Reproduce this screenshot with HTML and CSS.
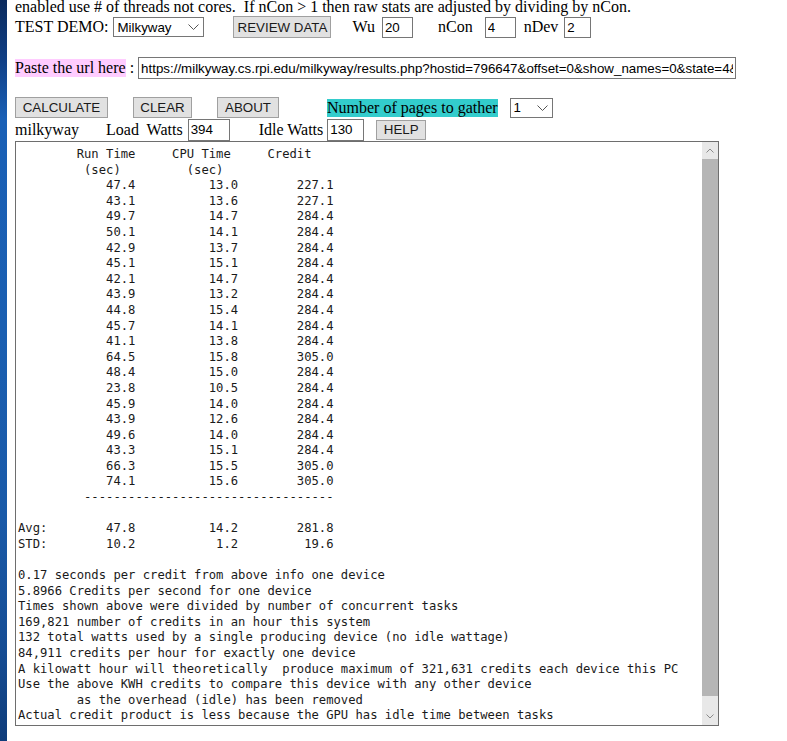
FILE: index.html
```html
<!DOCTYPE html>
<html>
<head>
<meta charset="utf-8">
<title>Credit calculator</title>
<link rel="stylesheet" href="styles.css">
</head>
<body>
<div class="page">
  <div class="intro">enabled use # of threads not cores.&nbsp; If nCon &gt; 1 then raw stats are adjusted by dividing by nCon.</div>

  <div class="row row-demo">
    <span class="label">TEST DEMO:</span>
    <span class="select sel-demo"><span class="sel-text">Milkyway</span><svg class="chev" width="11" height="6" viewBox="0 0 11 6"><path d="M0.5 0.5 L5.5 5.5 L10.5 0.5" fill="none" stroke="#555" stroke-width="1"/></svg></span>
    <button class="btn btn-review">REVIEW DATA</button>
    <span class="label l-wu">Wu</span>
    <input class="field f-wu" type="text" value="20">
    <span class="label l-ncon">nCon</span>
    <input class="field f-ncon" type="text" value="4">
    <span class="label l-ndev">nDev</span>
    <input class="field f-ndev" type="text" value="2">
  </div>

  <div class="row row-url">
    <span class="label pink">Paste the url here</span>
    <span class="label colon">:</span>
    <input class="field f-url" type="text" value="https://milkyway.cs.rpi.edu/milkyway/results.php?hostid=796647&amp;offset=0&amp;show_names=0&amp;state=4&amp;appid=">
  </div>

  <div class="row row-actions">
    <button class="btn btn-calc">CALCULATE</button>
    <button class="btn btn-clear">CLEAR</button>
    <button class="btn btn-about">ABOUT</button>
    <span class="label teal">Number of pages to gather</span>
    <span class="select sel-pages"><span class="sel-text">1</span><svg class="chev" width="11" height="6" viewBox="0 0 11 6"><path d="M0.5 0.5 L5.5 5.5 L10.5 0.5" fill="none" stroke="#555" stroke-width="1"/></svg></span>
  </div>

  <div class="row row-watts">
    <span class="label">milkyway</span>
    <span class="label l-load">Load&nbsp; Watts</span>
    <input class="field f-load" type="text" value="394">
    <span class="label l-idle">Idle Watts</span>
    <input class="field f-idle" type="text" value="130">
    <button class="btn btn-help">HELP</button>
  </div>

  <div class="output">
    <pre class="output-text">        Run Time     CPU Time     Credit
         (sec)         (sec)
            47.4          13.0        227.1
            43.1          13.6        227.1
            49.7          14.7        284.4
            50.1          14.1        284.4
            42.9          13.7        284.4
            45.1          15.1        284.4
            42.1          14.7        284.4
            43.9          13.2        284.4
            44.8          15.4        284.4
            45.7          14.1        284.4
            41.1          13.8        284.4
            64.5          15.8        305.0
            48.4          15.0        284.4
            23.8          10.5        284.4
            45.9          14.0        284.4
            43.9          12.6        284.4
            49.6          14.0        284.4
            43.3          15.1        284.4
            66.3          15.5        305.0
            74.1          15.6        305.0
         ----------------------------------

Avg:        47.8          14.2        281.8
STD:        10.2           1.2         19.6

0.17 seconds per credit from above info one device
5.8966 Credits per second for one device
Times shown above were divided by number of concurrent tasks
169,821 number of credits in an hour this system
132 total watts used by a single producing device (no idle wattage)
84,911 credits per hour for exactly one device
A kilowatt hour will theoretically  produce maximum of 321,631 credits each device this PC
Use the above KWH credits to compare this device with any other device
        as the overhead (idle) has been removed
Actual credit product is less because the GPU has idle time between tasks</pre>
    <div class="scrollbar">
      <div class="sb-btn"><svg width="8" height="5" viewBox="0 0 8 5"><path d="M0.5 4.5 L4 1 L7.5 4.5" fill="none" stroke="#8a8a8a" stroke-width="1"/></svg></div>
      <div class="sb-thumb"></div>
      <div class="sb-rest">
        <div class="sb-btn"><svg width="8" height="5" viewBox="0 0 8 5"><path d="M0.5 0.5 L4 4 L7.5 0.5" fill="none" stroke="#8a8a8a" stroke-width="1"/></svg></div>
      </div>
    </div>
  </div>
</div>
</body>
</html>
```

FILE: styles.css
```css
html, body {
  margin: 0;
  padding: 0;
}

body {
  background:
    linear-gradient(to bottom, #0b2a5c 0%, #103f85 8%, #1a60b6 16%, #1b5fb1 45%, #1a5aa8 70%, #154c93 88%, #0f3c7a 100%) 0 0 / 7px 100% no-repeat,
    #ffffff;
  font-family: "Liberation Serif", "Times New Roman", serif;
  font-size: 16px;
  color: #000;
  min-height: 741px;
  overflow: hidden;
}

.page {
  padding-left: 15px;
}

.intro {
  margin-top: -2px;
  height: 18px;
  line-height: 18px;
  white-space: nowrap;
}

.row {
  display: flex;
  align-items: center;
  white-space: nowrap;
}

.label {
  line-height: 18px;
}

.row-demo {
  height: 22px;
}

.row-url {
  margin-top: 19px;
  height: 22px;
}

.row-actions {
  margin-top: 18px;
  height: 21px;
}

.row-watts {
  margin-top: 0;
  height: 23px;
}

/* controls */
.field {
  box-sizing: border-box;
  height: 21px;
  margin: 0;
  padding: 1px 2px;
  border: 1px solid #767676;
  background: #fff;
  font-family: "Liberation Sans", Arial, sans-serif;
  font-size: 13.33px;
  color: #000;
  outline: none;
}

.btn {
  box-sizing: border-box;
  height: 22px;
  margin: 0;
  padding: 0;
  border: 1px solid #a0a0a0;
  background: #e1e1e1;
  font-family: "Liberation Sans", Arial, sans-serif;
  font-size: 13.33px;
  color: #1a1a1a;
  text-align: center;
}

.select {
  box-sizing: border-box;
  display: flex;
  align-items: center;
  justify-content: space-between;
  height: 20px;
  border: 1px solid #767676;
  background: #fff;
  padding: 0 4px 0 3px;
  font-family: "Liberation Sans", Arial, sans-serif;
  font-size: 13.33px;
  color: #000;
}

.chev {
  display: block;
}

/* row: test demo */
.sel-demo {
  width: 91px;
  margin-left: 5px;
}

.btn-review {
  width: 98px;
  margin-left: 29px;
}

.l-wu {
  margin-left: 21px;
}

.f-wu {
  width: 31px;
  margin-left: 7px;
}

.l-ncon {
  margin-left: 25px;
}

.f-ncon {
  width: 31px;
  margin-left: 12px;
}

.l-ndev {
  margin-left: 8px;
}

.f-ndev {
  width: 27px;
  margin-left: 6px;
}

/* row: url */
.pink {
  background: #ffccff;
}

.colon {
  margin-left: 4px;
}

.f-url {
  width: 598px;
  height: 22px;
  margin-left: 4px;
}

/* row: actions */
.btn-calc {
  width: 93px;
  height: 21px;
}

.btn-clear {
  width: 59px;
  height: 21px;
  margin-left: 25px;
}

.btn-about {
  width: 62px;
  height: 21px;
  margin-left: 25px;
}

.teal {
  background: #33cccc;
  margin-left: 48px;
}

.sel-pages {
  width: 43px;
  margin-left: 12px;
}

/* row: watts */
.l-load {
  margin-left: 27px;
}

.f-load {
  width: 42px;
  height: 22px;
  margin-left: 5px;
}

.l-idle {
  margin-left: 29px;
}

.f-idle {
  width: 37px;
  height: 22px;
  margin-left: 4px;
}

.btn-help {
  width: 50px;
  height: 20px;
  margin-left: 12px;
}

/* output box */
.output {
  box-sizing: border-box;
  display: flex;
  width: 704px;
  height: 585px;
  border: 1px solid #6e6e6e;
  background: #fff;
}

.output-text {
  flex: 1;
  margin: 0;
  padding: 5px 0 0 2px;
  overflow: hidden;
  font-family: "DejaVu Sans Mono", "Liberation Mono", monospace;
  font-size: 12.2px;
  line-height: 15.6px;
  color: #1a1a1a;
}

.scrollbar {
  width: 16px;
  display: flex;
  flex-direction: column;
  background: #e8e8e8;
}

.sb-btn {
  height: 17px;
  display: flex;
  align-items: center;
  justify-content: center;
}

.sb-thumb {
  height: 537px;
  background: #b5b5b5;
}

.sb-rest {
  flex: 1;
  display: flex;
  flex-direction: column;
  justify-content: flex-end;
}
```
